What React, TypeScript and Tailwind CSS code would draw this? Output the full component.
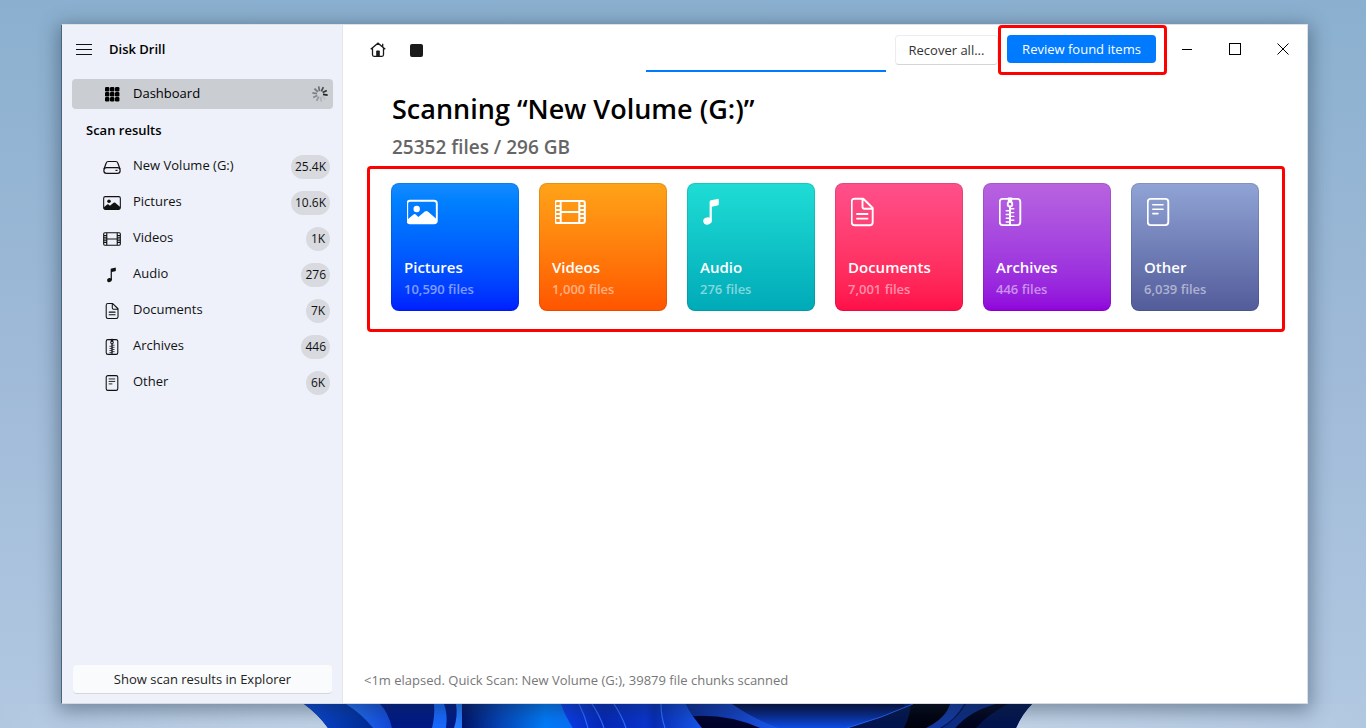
import type { ReactNode } from "react";

type Kind = "pictures" | "videos" | "audio" | "documents" | "archives" | "other";

function Drawing({ kind }: { kind: Kind }) {
  switch (kind) {
    case "pictures":
      return (
        <>
          <rect x="1.2" y="4.7" width="29.6" height="22.6" rx="2.8" strokeWidth="1.9" />
          <path
            d="M1.5 23.5 L7.5 18.6 Q8.8 17.6 10 18.7 L12.3 21 L18.8 15.6 Q20.3 14.4 21.8 15.6 L30.5 23 V25 Q30.5 27.3 28 27.3 H4 Q1.5 27.3 1.5 25 Z"
            fill="currentColor"
            stroke="none"
          />
          <circle cx="10.7" cy="13" r="3.2" fill="currentColor" stroke="none" />
        </>
      );
    case "videos":
      return (
        <path
          strokeWidth="2"
          d="M3.2 4.9 H28.8 Q30.8 4.9 30.8 6.9 V25.1 Q30.8 27.1 28.8 27.1 H3.2 Q1.2 27.1 1.2 25.1 V6.9 Q1.2 4.9 3.2 4.9 Z M6.7 5 V27 M25.3 5 V27 M6.7 16 H25.3 M1.2 10 H6.7 M1.2 14 H6.7 M1.2 18 H6.7 M1.2 22 H6.7 M25.3 10 H30.8 M25.3 14 H30.8 M25.3 18 H30.8 M25.3 22 H30.8"
        />
      );
    case "audio":
      return (
        <g fill="currentColor" stroke="none">
          <ellipse cx="11.5" cy="25" rx="4.3" ry="3.6" transform="rotate(-14 11.5 25)" />
          <path d="M13.6 25 V6 Q13.6 4.6 15 4.3 L21.3 2.9 Q22.8 2.6 22.8 4 V8.1 Q22.8 9.2 21.5 9.5 L15.8 10.8 V25 Z" />
        </g>
      );
    case "documents":
      return (
        <path
          strokeWidth="1.9"
          d="M8.7 2.7 H17.3 L26.7 12 V26.3 Q26.7 29.3 23.7 29.3 H8.7 Q5.7 29.3 5.7 26.3 V5.7 Q5.7 2.7 8.7 2.7 Z M16.5 3 V10.7 Q16.5 12.8 18.6 12.8 H26.5 M11 18 H21.5 M11 22.6 H21.5"
        />
      );
    case "archives":
      return (
        <>
          <path
            strokeWidth="1.9"
            d="M14 2.9 H8.7 Q5.7 2.9 5.7 5.9 V26.1 Q5.7 29.1 8.7 29.1 H23.3 Q26.3 29.1 26.3 26.1 V5.9 Q26.3 2.9 23.3 2.9 H18 M16 11 V29"
          />
          <rect x="13.8" y="1.5" width="4.4" height="4.5" fill="currentColor" stroke="none" />
          <circle cx="16" cy="8.2" r="2.3" strokeWidth="1.8" />
          <path
            strokeWidth="1.4"
            d="M12.2 14.7 H16 M12.2 18.5 H16 M12.2 22.3 H16 M12.2 26 H16 M16 12.8 H19.8 M16 16.6 H19.8 M16 20.4 H19.8 M16 24.2 H19.8"
          />
        </>
      );
    case "other":
      return (
        <>
          <rect x="5.7" y="2.9" width="20.6" height="26.2" rx="3" strokeWidth="1.9" />
          <path strokeWidth="1.6" d="M10.8 8.8 H21 M10.8 13.2 H21 M10.8 17.6 H16" />
        </>
      );
  }
}

function FileIcon({ kind, className, inset = 0 }: { kind: Kind; className: string; inset?: number }) {
  return (
    <svg viewBox={`${inset} 0 32 32`} className={className} fill="none" stroke="currentColor" strokeLinecap="round" strokeLinejoin="round" aria-hidden="true">
      <Drawing kind={kind} />
    </svg>
  );
}

function DriveIcon() {
  return (
    <svg viewBox="0 0 18 18" className="size-[18px]" fill="none" stroke="currentColor" strokeWidth="1.2" aria-hidden="true">
      <path d="M1 11 L3.2 5 Q3.7 3.5 5.2 3.5 H12.8 Q14.3 3.5 14.8 5 L17 11" />
      <rect x="0.9" y="9.7" width="16.2" height="5.6" rx="2.6" />
      <path d="M12.5 12.4 H14.5" />
    </svg>
  );
}

function GridIcon() {
  return (
    <svg viewBox="0 0 18 18" className="size-[18px]" fill="currentColor" aria-hidden="true">
      {[2, 7, 12].map((y) => [2, 7, 12].map((x) => <rect key={`${x}-${y}`} x={x} y={y} width="4.4" height="4.4" rx="1.2" />))}
    </svg>
  );
}

function Spinner() {
  const opacities = [0.55, 0.75, 0.9, 1, 0.08, 0.15, 0.3, 0.4, 0.45, 0.5];
  return (
    <svg viewBox="0 0 16 16" className="size-4" stroke="#222" strokeWidth="1.7" aria-hidden="true">
      {opacities.map((opacity, i) => (
        <path key={i} d="M8 0.3 V5" opacity={opacity} transform={`rotate(${i * 36 - 10} 8 8)`} />
      ))}
    </svg>
  );
}

function Wallpaper() {
  return (
    <svg viewBox="0 0 728 24" className="h-6 w-[728px]" preserveAspectRatio="none" aria-hidden="true">
      <defs>
        <linearGradient id="petalA" x1="0" x2="1"><stop offset="0" stopColor="#0a48d8" /><stop offset="1" stopColor="#002a90" /></linearGradient>
        <linearGradient id="petalB" x1="0" x2="1"><stop offset="0" stopColor="#2473fa" /><stop offset="1" stopColor="#1248d8" /></linearGradient>
        <linearGradient id="petalC" x1="0" x2="1"><stop offset="0" stopColor="#001468" /><stop offset=".35" stopColor="#0546ba" /><stop offset=".75" stopColor="#007cfb" /><stop offset="1" stopColor="#0a70f8" /></linearGradient>
        <linearGradient id="petalD" x1="0" x2="1"><stop offset="0" stopColor="#0c3ff0" /><stop offset=".3" stopColor="#0528b8" /><stop offset=".6" stopColor="#0a34d0" /><stop offset=".66" stopColor="#062cb8" /><stop offset="1" stopColor="#1858ec" /></linearGradient>
        <linearGradient id="petalE" x1="0" x2="0" y1="0" y2="1"><stop offset="0" stopColor="#020b40" /><stop offset="1" stopColor="#104ee8" /></linearGradient>
        <linearGradient id="petalF" x1="0" x2="1"><stop offset="0" stopColor="#0a2890" /><stop offset="1" stopColor="#1c58f0" /></linearGradient>
      </defs>
      <path d="M0 0 H728 Q718 10 712 24 H24 Q14 10 0 0 Z" fill="#001a86" />
      <path d="M0 0 H44 Q60 8 72 24 H24 Q14 10 0 0 Z" fill="url(#petalA)" />
      <path d="M42 0 H76 Q84 8 88 24 H69 Q58 10 42 0 Z" fill="url(#petalB)" />
      <path d="M130 0 H140 Q144 10 142 24 H128 Q131 12 130 0 Z" fill="#1769ff" />
      <path d="M152 0 H158 V24 H150 Q154 12 152 0 Z" fill="#247cff" />
      <path d="M158 0 H258 Q264 12 269 24 H158 Z" fill="url(#petalC)" />
      <path d="M257 0 H382 Q388 12 398 24 H269 Q261 12 257 0 Z" fill="url(#petalD)" />
      <path d="M275 0 Q281 12 284 24 M288 0 Q296 12 300 24 M310 0 Q318 12 322 24 M357 0 Q357 12 361 24" fill="none" stroke="#2c6cff" strokeWidth="1.2" />
      <path d="M382 0 H600 V24 H398 Q388 12 382 0 Z" fill="url(#petalE)" />
      <path d="M389 12 Q425 8 462 24 H398 Z" fill="#02022c" />
      <path d="M382 0 H428 Q448 14 474 24 H456 Q425 10 389 12 Z" fill="url(#petalF)" />
      <path d="M609 0 H728 Q718 10 712 24 H543 Q578 14 609 0 Z" fill="#03144e" />
      <path d="M607 0 H650 Q640 15 628 24 H600 Q606 12 607 0 Z" fill="#01020f" />
      <path d="M646 0 H660 Q652 15 636 24 H622 Q642 14 646 0 Z" fill="#1439a0" />
      <path d="M662 0 H692 Q664 10 651 24 H638 Q654 14 662 0 Z" fill="#0d2c84" />
      <path d="M692 0 H704 Q684 10 672 24 H652 Q664 8 692 0 Z" fill="#02041e" />
      <path d="M609 0 Q578 14 543 24" fill="none" stroke="#2762ef" />
    </svg>
  );
}

function SidebarItem({ icon, label, count }: { icon: ReactNode; label: string; count: string }) {
  return (
    <li className="h-9">
      <a href="#" className="flex h-full items-center pr-3 pl-[41px]">
        <span className="mt-0.5 flex">{icon}</span>
        <span className="ml-3 flex-1 text-[13px]">{label}</span>
        <span className="mt-0.5 flex h-6 min-w-6 items-center justify-center rounded-full bg-[#d8dae0] px-1 text-xs">{count}</span>
      </a>
    </li>
  );
}

const results: { kind: Kind; label: string; count: string; files: string; fill: string; inset: number }[] = [
  { kind: "pictures", label: "Pictures", count: "10.6K", files: "10,590 files", fill: "from-[#168bff] to-[#001cff]", inset: 1 },
  { kind: "videos", label: "Videos", count: "1K", files: "1,000 files", fill: "from-[#ffa318] to-[#ff5400]", inset: 1 },
  { kind: "audio", label: "Audio", count: "276", files: "276 files", fill: "from-[#1eddd5] to-[#00aab8]", inset: 7 },
  { kind: "documents", label: "Documents", count: "7K", files: "7,001 files", fill: "from-[#ff4f8b] to-[#ff0c48]", inset: 5 },
  { kind: "archives", label: "Archives", count: "446", files: "446 files", fill: "from-[#b863e0] to-[#9100dc]", inset: 5 },
  { kind: "other", label: "Other", count: "6K", files: "6,039 files", fill: "from-[#91a4d5] to-[#535c9a]", inset: 5 },
];

export default function App() {
  return (
    <div className="flex min-h-screen flex-col bg-linear-to-b from-[#8bb0cf] via-[#9fbad8] to-[#b2c8e1] pt-6 font-['Open_Sans',sans-serif] text-black">
      <div className="relative z-10 mr-[58px] ml-[61px] flex flex-1 border border-t-[#dce3e8] border-r-[#dce0e4] border-b-[#d7dade] border-l-[#49647d] bg-white shadow-[0_4px_18px_3px_rgba(25,45,65,0.42)]">
        <aside className="flex w-[281px] shrink-0 flex-col border-r border-[#e5e6ea] bg-[#eef1fa]">
          <div className="flex h-[50px] items-center pl-3.5">
            <button aria-label="Menu" className="flex size-4 items-center">
              <svg viewBox="0 0 16 16" className="size-4" stroke="#111" aria-hidden="true">
                <path d="M0 2.5 H16 M0 7.5 H16 M0 12.5 H16" />
              </svg>
            </button>
            <span className="ml-[17px] text-[13px] font-semibold">Disk Drill</span>
          </div>
          <nav className="flex flex-1 flex-col">
            <a href="#" className="mt-1 mr-[9px] ml-2.5 flex h-[30px] items-center rounded bg-[#cacdd2] pr-[5px] pl-[31px]">
              <GridIcon />
              <span className="ml-3 flex-1 text-[13px]">Dashboard</span>
              <Spinner />
            </a>
            <h2 className="mt-[11px] pl-6 text-[13px] leading-5 font-semibold">Scan results</h2>
            <ul className="mt-2 text-[#111]">
              <SidebarItem icon={<DriveIcon />} label="New Volume (G:)" count="25.4K" />
              {results.map((r) => (
                <SidebarItem key={r.kind} icon={<FileIcon kind={r.kind} className="size-[18px]" />} label={r.label} count={r.count} />
              ))}
            </ul>
          </nav>
          <button className="mr-2.5 mb-[9px] ml-[11px] h-[29px] rounded-sm border-b border-[#d3d6dc] bg-[#fafbfd] pt-0.5 text-[13px] text-[#222]">
            Show scan results in Explorer
          </button>
        </aside>

        <main className="flex min-w-0 flex-1 flex-col">
          <header className="flex h-[50px] items-stretch pr-1">
            <div className="flex items-center gap-6 pl-[27px]">
              <button aria-label="Home" className="flex">
                <svg viewBox="0 0 16 16" className="size-4" fill="none" stroke="#1a1a1a" strokeWidth="1.3" aria-hidden="true">
                  <path d="M0.7 7.3 L8 1.2 L15.3 7.3 M2.5 6.2 V12.8 Q2.5 14.3 4 14.3 H12 Q13.5 14.3 13.5 12.8 V6.2 M12.7 1.8 V4.8" />
                  <path d="M6.2 14 V9.2 Q6.2 8.5 7 8.5 H9 Q9.8 8.5 9.8 9.2 V14 Z" fill="#1a1a1a" stroke="none" />
                </svg>
              </button>
              <button aria-label="Stop scan" className="size-[13px] rounded-xs bg-[#1a1a1a]" />
            </div>
            <div className="flex-1" />
            <div className="mb-[3px] w-60 border-b-2 border-[#007aff]" role="progressbar" aria-label="Scanning" />
            <div className="ml-[9px] flex items-center">
              <button className="h-[30px] w-[103px] rounded-sm border border-[#ececec] border-b-[#d5d5d5] pt-px text-[13px] text-[#333]">Recover all...</button>
              <div className="rounded border-3 border-[#fe0000] pt-[7px] pr-2 pb-[9px] pl-1.5">
                <button className="h-7 w-[149px] rounded bg-[#007aff] pt-px text-[13px] text-white">Review found items</button>
              </div>
            </div>
            <div className="flex pb-0.5">
              <button aria-label="Minimize" className="flex w-10 items-center justify-center">
                <svg viewBox="0 0 12 12" className="size-3" stroke="#000" aria-hidden="true"><path d="M1 6.5 H11" /></svg>
              </button>
              <button aria-label="Maximize" className="flex w-14 items-center justify-center">
                <svg viewBox="0 0 12 12" className="size-3" fill="none" stroke="#000" aria-hidden="true"><rect x=".5" y=".5" width="11" height="11" /></svg>
              </button>
              <button aria-label="Close" className="flex w-10 items-center justify-center">
                <svg viewBox="0 0 12 12" className="size-3" stroke="#000" aria-hidden="true"><path d="M.5 .5 L11.5 11.5 M11.5 .5 L.5 11.5" /></svg>
              </button>
            </div>
          </header>

          <div className="mt-4 pl-[49px]">
            <h1 className="text-[27px] leading-9 font-semibold">Scanning “New Volume (G:)”</h1>
            <p className="mt-1.5 text-[19px] leading-7 font-semibold text-[#666]">25352 files / 296 GB</p>
          </div>

          <section aria-label="Found items" className="mt-[5px] mr-[22px] ml-6 flex gap-5 rounded border-3 border-[#fe0000] pt-3.5 pr-5 pb-[18px] pl-[21px]">
            {results.map((r) => (
              <a key={r.kind} href="#" className={`flex size-32 flex-col rounded-lg border border-black/10 bg-linear-to-b bg-origin-border px-3 pt-3 text-white ${r.fill}`}>
                <FileIcon kind={r.kind} className="ml-[3px] size-8" inset={r.inset} />
                <span className="mt-[27px] text-[15px] leading-6 font-semibold">{r.label}</span>
                <span className="text-[13px] leading-5 font-semibold text-white/50">{r.files}</span>
              </a>
            ))}
          </section>

          <footer className="mt-auto pb-[13px] pl-[21px] text-[13px] leading-5 text-[#777]">
            &lt;1m elapsed. Quick Scan: New Volume (G:), 39879 file chunks scanned
          </footer>
        </main>
      </div>
      <div className="flex h-6 shrink-0 bg-linear-to-r from-transparent via-[#d3dfee] to-transparent pl-[304px]">
        <Wallpaper />
      </div>
    </div>
  );
}
